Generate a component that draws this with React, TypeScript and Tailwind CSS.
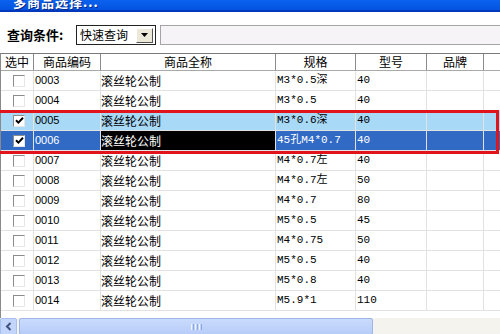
import React from "react";

const cols = [33, 67, 175, 80, 71, 57, 90];
const heads = ["选中", "商品编码", "商品全称", "规格", "型号", "品牌", "生产厂家"];

type Row = { code: string; spec: string; model: string; checked?: boolean; sel?: "light" | "dark" };

const rows: Row[] = [
  { code: "0003", spec: "M3*0.5深", model: "40" },
  { code: "0004", spec: "M3*0.5", model: "40" },
  { code: "0005", spec: "M3*0.6深", model: "40", checked: true, sel: "light" },
  { code: "0006", spec: "45孔M4*0.7", model: "40", checked: true, sel: "dark" },
  { code: "0007", spec: "M4*0.7左", model: "40" },
  { code: "0008", spec: "M4*0.7左", model: "50" },
  { code: "0009", spec: "M4*0.7", model: "80" },
  { code: "0010", spec: "M5*0.5", model: "45" },
  { code: "0011", spec: "M4*0.75", model: "50" },
  { code: "0012", spec: "M5*0.5", model: "40" },
  { code: "0013", spec: "M5*0.8", model: "40" },
  { code: "0014", spec: "M5.9*1", model: "110" },
];

const cjk = "font-['SimSun','Noto_Sans_CJK_SC',sans-serif]";
const mono = "font-['Liberation_Mono','Noto_Sans_CJK_SC',monospace]";
const sans = "font-['Liberation_Sans','Noto_Sans_CJK_SC',sans-serif]";

function CheckBox({ checked }: { checked?: boolean }) {
  return (
    <div className="w-[12px] h-[12px] bg-white border-t border-l border-[#8c8c8c] border-r border-b border-r-[#e6e6e6] border-b-[#e6e6e6] flex items-center justify-center">
      {checked && (
        <svg width="9" height="9" viewBox="0 0 9 9">
          <path d="M1 4.2 L3.4 6.6 L8 1.8" stroke="#000" strokeWidth="2" fill="none" />
        </svg>
      )}
    </div>
  );
}

export default function App() {
  return (
    <div className="w-[500px] h-[334px] bg-white overflow-hidden relative">
      {/* Title bar */}
      <div className="h-[12px] bg-gradient-to-b from-[#0b62ee] to-[#0453e0] border-b-2 border-[#0038bb] overflow-hidden pl-[13px]">
        <div className={`${cjk} text-white font-bold text-[13px] leading-[14px] -mt-[5px] tracking-[1px] [text-shadow:1px_1px_0_#0a2a8a]`}>
          多商品选择...
        </div>
      </div>

      {/* Query row */}
      <div className="flex items-center h-[20px] mt-[13px]">
        <span className={`${cjk} font-bold text-[13px] ml-[7px] w-[69px] text-black`}>查询条件:</span>
        <div className="w-[80px] h-[20px] border border-[#222] bg-white flex items-center pl-[3px] pr-[2px]">
          <span className={`${cjk} text-[12px] flex-1 text-black`}>快速查询</span>
          <div className="w-[17px] h-[15px] bg-[#ece9d8] border border-t-white border-l-white border-r-[#555] border-b-[#555] flex items-center justify-center">
            <svg width="7" height="4" viewBox="0 0 7 4">
              <path d="M0 0 H7 L3.5 4 Z" fill="#000" />
            </svg>
          </div>
        </div>
        <div className="ml-[4px] flex-1 h-[20px] bg-[#f7f4f8] border-t border-b border-l border-[#a5a5a5]" />
      </div>

      {/* Table */}
      <div className="mt-[8px] h-[265px] border-l border-[#8a8a8a] overflow-hidden">
        <div className="flex h-[18px] border-t border-[#7a7a7a] border-b border-b-[#a9a9a9] bg-white w-[580px]">
          {heads.map((h, i) => (
            <div
              key={h}
              style={{ width: cols[i] }}
              className={`${cjk} shrink-0 text-[12px] leading-[16px] text-center text-black border-r border-[#8a8a8a]`}
            >
              {h}
            </div>
          ))}
        </div>
        {rows.map((r) => {
          const bg = r.sel === "light" ? "bg-[#a8d9f7]" : r.sel === "dark" ? "bg-[#316ac5]" : "bg-white";
          const fg = r.sel === "dark" ? "text-white" : "text-black";
          const line = "border-r border-[#e2e2e2]";
          return (
            <div key={r.code} className={`flex h-[20px] border-b border-[#e2e2e2] w-[580px] ${bg} ${fg}`}>
              <div style={{ width: cols[0] }} className={`shrink-0 flex items-center justify-center pl-[4px] ${line}`}>
                <CheckBox checked={r.checked} />
              </div>
              <div style={{ width: cols[1] }} className={`shrink-0 flex items-center pl-[1px] text-[11px] ${sans} ${line}`}>
                {r.code}
              </div>
              <div
                style={{ width: cols[2] }}
                className={`shrink-0 flex items-center text-[12px] ${cjk} ${line}`}
              >
                <span className={r.sel === "dark" ? "bg-black h-full flex items-center w-full" : ""}>滚丝轮公制</span>
              </div>
              <div style={{ width: cols[3] }} className={`shrink-0 flex items-center pl-[1px] text-[11px] ${mono} ${line}`}>
                {r.spec}
              </div>
              <div style={{ width: cols[4] }} className={`shrink-0 flex items-center pl-[1px] text-[11px] ${mono} ${line}`}>
                {r.model}
              </div>
              <div style={{ width: cols[5] }} className={`shrink-0 ${line}`} />
              <div style={{ width: cols[6] }} className={`shrink-0 ${line}`} />
            </div>
          );
        })}
      </div>

      {/* Horizontal scrollbar */}
      <div className="h-[17px] flex bg-[#f4f3ee]">
        <div className="w-[17px] h-[17px] rounded-[2px] bg-[#c4d5fc] border border-[#a8bff2] flex items-center justify-center">
          <svg width="7" height="9" viewBox="0 0 7 9">
            <path d="M5.5 1 L2 4.5 L5.5 8" stroke="#3d5080" strokeWidth="2" fill="none" />
          </svg>
        </div>
        <div className="ml-[2px] w-[354px] h-[17px] rounded-[2px] bg-gradient-to-b from-[#cadbfd] to-[#b7ccf8] border border-[#9db5ea] flex items-center justify-center gap-[1px]">
          <div className="w-[1px] h-[6px] bg-[#eef3fe]" />
          <div className="w-[1px] h-[6px] bg-[#8ea8df]" />
          <div className="w-[1px] h-[6px] bg-[#eef3fe]" />
          <div className="w-[1px] h-[6px] bg-[#8ea8df]" />
          <div className="w-[1px] h-[6px] bg-[#eef3fe]" />
          <div className="w-[1px] h-[6px] bg-[#8ea8df]" />
        </div>
      </div>

      {/* Red annotation rectangle */}
      <div className="absolute left-[-4px] top-[110px] w-[503px] h-[44px] border-[3px] border-[#e0141a] pointer-events-none" />
    </div>
  );
}
